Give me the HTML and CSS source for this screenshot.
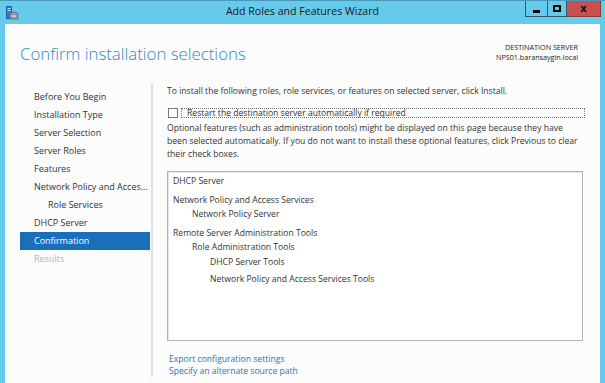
FILE: index.html
```html
<!DOCTYPE html>
<html>
<head>
<meta charset="utf-8">
<link rel="stylesheet" href="styles.css">
</head>
<body>
<div class="window">
  <div class="titlebar">
    <div class="tb-left">
      <svg class="app-icon" width="13" height="14" viewBox="0 0 13 14">
        <rect x="0.5" y="0.5" width="5" height="12" fill="#2f7fd0" stroke="#1b5ea8" stroke-width="1"/>
        <rect x="1.5" y="2" width="3" height="1" fill="#cfe6fb"/>
        <rect x="1.5" y="4" width="3" height="1" fill="#cfe6fb"/>
        <path d="M4 8 L6 6 H10 L12 8 V13 H4 Z" fill="#8c9aa6" stroke="#5b6b78" stroke-width="0.8"/>
        <rect x="6" y="9.5" width="4" height="1.2" fill="#e6eef4"/>
      </svg>
    </div>
    <div class="tb-title">Add Roles and Features Wizard</div>
    <div class="tb-right">
      <div class="tb-btn tb-min"><span class="min-glyph"></span></div>
      <div class="tb-btn tb-max"><span class="max-glyph"></span></div>
      <div class="tb-btn tb-close">x</div>
    </div>
  </div>
  <div class="client">
    <div class="header">
      <h1 class="heading">Confirm installation selections</h1>
      <div class="dest">
        <div>DESTINATION SERVER</div>
        <div>NPS01.baransaygin.local</div>
      </div>
    </div>
    <div class="main">
      <nav class="nav">
        <div class="nav-item">Before You Begin</div>
        <div class="nav-item">Installation Type</div>
        <div class="nav-item">Server Selection</div>
        <div class="nav-item">Server Roles</div>
        <div class="nav-item">Features</div>
        <div class="nav-item">Network Policy and Acces...</div>
        <div class="nav-item nav-sub">Role Services</div>
        <div class="nav-item">DHCP Server</div>
        <div class="nav-item nav-active">Confirmation</div>
        <div class="nav-item nav-disabled">Results</div>
      </nav>
      <section class="content">
        <p class="intro">To install the following roles, role services, or features on selected server, click Install.</p>
        <div class="check-row">
          <span class="checkbox"></span>
          <span class="check-label">Restart the destination server automatically if required</span>
        </div>
        <p class="note">Optional features (such as administration tools) might be displayed on this page because they have<br>been selected automatically. If you do not want to install these optional features, click Previous to clear<br>their check boxes.</p>
        <div class="listbox">
          <div class="group">
            <div class="li">DHCP Server</div>
          </div>
          <div class="group">
            <div class="li">Network Policy and Access Services</div>
            <div class="li lvl1">Network Policy Server</div>
          </div>
          <div class="group">
            <div class="li">Remote Server Administration Tools</div>
            <div class="li lvl1">Role Administration Tools</div>
            <div class="li lvl2 gap1">DHCP Server Tools</div>
            <div class="li lvl2 gap3">Network Policy and Access Services Tools</div>
          </div>
        </div>
        <div class="links">
          <a class="link">Export configuration settings</a>
          <a class="link">Specify an alternate source path</a>
        </div>
      </section>
    </div>
  </div>
</div>
</body>
</html>
```

FILE: styles.css
```css
* { box-sizing: border-box; }
html, body { margin: 0; padding: 0; }
body {
  font-family: "Open Sans", "Noto Sans", sans-serif;
  color: #333;
  background: #66cbea;
}
.window {
  width: 605px;
  height: 383px;
  background: #66cbea;
  display: flex;
  flex-direction: column;
  overflow: hidden;
  border-top: 1px solid #4a98b8;
}
.titlebar {
  height: 23px;
  display: grid;
  grid-template-columns: 1fr auto 1fr;
  align-items: start;
}
.tb-left { padding: 5px 0 0 6px; }
.app-icon { display: block; }
.tb-title {
  font-size: 10.6px;
  line-height: 24px;
  margin-top: -2px;
  color: #1a1a1a;
}
.tb-right {
  display: flex;
  justify-content: flex-end;
  padding-right: 4px;
}
.tb-btn {
  height: 17px;
  margin-top: -1px;
  display: flex;
  align-items: center;
  justify-content: center;
}
.tb-min, .tb-max {
  width: 21px;
  border: 1px solid #2b5d70;
  background: #66cbea;
}
.tb-min { width: 22px; border-right: none; }
.tb-max { width: 20px; }
.min-glyph {
  width: 7px; height: 3px; background: #000; margin-top: 5px;
}
.max-glyph {
  width: 8px; height: 7px; border: 2px solid #000;
}
.tb-close {
  width: 34px;
  background: #c75050;
  border: 1px solid #8e3a3a;
  border-left: none;
  font-family: "DejaVu Sans", sans-serif;
  font-weight: bold;
  font-size: 10px;
  color: #111;
}
.client {
  flex: 1;
  margin: 0 5px;
  background: #fcfcfc;
  display: flex;
  flex-direction: column;
}
.header {
  display: flex;
  justify-content: space-between;
  align-items: flex-start;
  padding: 18px 22px 0 15px;
  height: 59px;
}
.heading {
  margin: 0;
  font-size: 16.8px;
  font-weight: 300;
  line-height: 24px;
  color: #2f8ac2;
}
.dest {
  text-align: right;
  font-size: 7.2px;
  line-height: 10px;
  color: #222;
  padding-top: 0;
}
.main {
  flex: 1;
  display: flex;
  padding-bottom: 6px;
}
.nav {
  width: 148px;
  padding: 5px 0 0 15px;
  border-right: 2px solid #e3e3e3;
}
.nav-item {
  width: 130px;
  height: 18px;
  line-height: 18px;
  padding-left: 14px;
  font-size: 9px;
  color: #333;
  white-space: nowrap;
}
.nav-sub { padding-left: 28px; }
.nav-active { background: #1a6fba; color: #fff; }
.nav-disabled { color: #b3b3b3; }
.content {
  flex: 1;
  padding-left: 14px;
  font-size: 8.6px;
}
.intro {
  margin: 0;
  padding-top: 1px;
  line-height: 14px;
}
.check-row {
  display: flex;
  align-items: center;
  width: 418px;
  height: 14px;
  margin-top: 8px;
}
.checkbox {
  width: 10px;
  height: 10px;
  border: 1px solid #777;
  background: #fff;
  margin-left: 1px;
}
.check-label {
  flex: 1;
  margin-left: 3px;
  padding-left: 5px;
  height: 10px;
  line-height: 9px;
  border: 1px dotted #777;
}
.note {
  margin: 2px 0 0;
  line-height: 13px;
  white-space: nowrap;
}
.listbox {
  margin-top: 10px;
  width: 416px;
  height: 170px;
  border: 1px solid #b4b4b4;
  box-shadow: inset 1px 1px 0 #e6e6e6;
  background: #fff;
  padding: 2px 0 0 5px;
  font-size: 8.6px;
}
.group + .group { margin-top: 5px; }
.li { line-height: 14px; white-space: nowrap; }
.lvl1 { padding-left: 19px; }
.lvl2 { padding-left: 37px; }
.gap1 { margin-top: 1px; }
.gap3 { margin-top: 3px; }
.links {
  margin-top: 13px;
  display: flex;
  flex-direction: column;
  padding-left: 2px;
}
.link {
  color: #2a77b0;
  line-height: 11.5px;
  font-size: 8.6px;
}
```
